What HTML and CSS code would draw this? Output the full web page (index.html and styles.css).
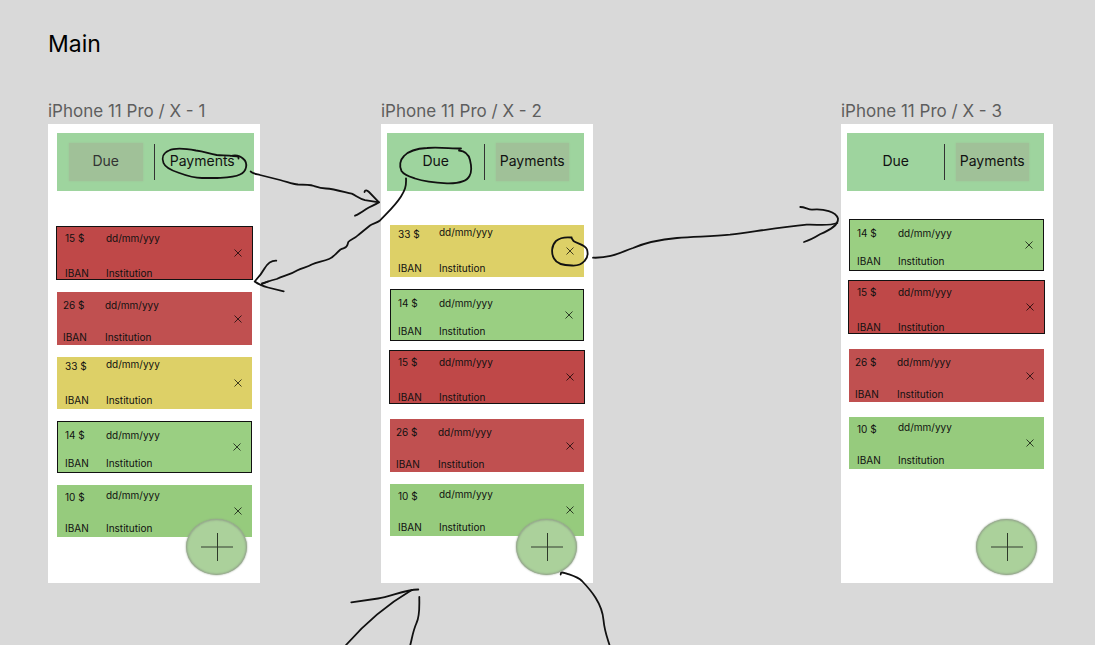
FILE: index.html
```html
<!DOCTYPE html>
<html lang="en">
<head>
<meta charset="utf-8">
<title>Main</title>
<link rel="stylesheet" href="styles.css">
</head>
<body>
<main class="canvas">
  <h1 class="page-title">Main</h1>

  <section class="artboard artboard-1">
    <h2 class="artboard-name">iPhone 11 Pro / X - 1</h2>
    <div class="screen">
      <nav class="tabs">
        <button class="tab tab-active tab-faded">Due</button>
        <span class="divider"></span>
        <button class="tab">Payments</button>
      </nav>
      <div class="list">
        <article class="card late">
          <div class="col"><span>15 $</span><span>IBAN</span></div>
          <div class="col wide"><span>dd/mm/yyy</span><span>Institution</span></div>
          <button class="close" aria-label="Remove"><svg viewBox="0 0 8 8"><path d="M.5 .5l7 7M7.5 .5l-7 7"/></svg></button>
        </article>
        <article class="card overdue">
          <div class="col"><span>26 $</span><span>IBAN</span></div>
          <div class="col wide"><span>dd/mm/yyy</span><span>Institution</span></div>
          <button class="close" aria-label="Remove"><svg viewBox="0 0 8 8"><path d="M.5 .5l7 7M7.5 .5l-7 7"/></svg></button>
        </article>
        <article class="card soon">
          <div class="col"><span>33 $</span><span>IBAN</span></div>
          <div class="col wide"><span>dd/mm/yyy</span><span>Institution</span></div>
          <button class="close" aria-label="Remove"><svg viewBox="0 0 8 8"><path d="M.5 .5l7 7M7.5 .5l-7 7"/></svg></button>
        </article>
        <article class="card paid">
          <div class="col"><span>14 $</span><span>IBAN</span></div>
          <div class="col wide"><span>dd/mm/yyy</span><span>Institution</span></div>
          <button class="close" aria-label="Remove"><svg viewBox="0 0 8 8"><path d="M.5 .5l7 7M7.5 .5l-7 7"/></svg></button>
        </article>
        <article class="card open">
          <div class="col"><span>10 $</span><span>IBAN</span></div>
          <div class="col wide"><span>dd/mm/yyy</span><span>Institution</span></div>
          <button class="close" aria-label="Remove"><svg viewBox="0 0 8 8"><path d="M.5 .5l7 7M7.5 .5l-7 7"/></svg></button>
        </article>
      </div>
      <button class="add" aria-label="Add"><svg viewBox="0 0 32 28"><path class="bar" d="M0 14h32"/><path class="stem" d="M16.5 0v28"/></svg></button>
    </div>
  </section>

  <section class="artboard artboard-2">
    <h2 class="artboard-name">iPhone 11 Pro / X - 2</h2>
    <div class="screen">
      <nav class="tabs">
        <button class="tab">Due</button>
        <span class="divider"></span>
        <button class="tab tab-active">Payments</button>
      </nav>
      <div class="list">
        <article class="card soon">
          <div class="col"><span>33 $</span><span>IBAN</span></div>
          <div class="col wide"><span>dd/mm/yyy</span><span>Institution</span></div>
          <button class="close" aria-label="Remove"><svg viewBox="0 0 8 8"><path d="M.5 .5l7 7M7.5 .5l-7 7"/></svg></button>
        </article>
        <article class="card paid">
          <div class="col"><span>14 $</span><span>IBAN</span></div>
          <div class="col wide"><span>dd/mm/yyy</span><span>Institution</span></div>
          <button class="close" aria-label="Remove"><svg viewBox="0 0 8 8"><path d="M.5 .5l7 7M7.5 .5l-7 7"/></svg></button>
        </article>
        <article class="card late">
          <div class="col"><span>15 $</span><span>IBAN</span></div>
          <div class="col wide"><span>dd/mm/yyy</span><span>Institution</span></div>
          <button class="close" aria-label="Remove"><svg viewBox="0 0 8 8"><path d="M.5 .5l7 7M7.5 .5l-7 7"/></svg></button>
        </article>
        <article class="card overdue">
          <div class="col"><span>26 $</span><span>IBAN</span></div>
          <div class="col wide"><span>dd/mm/yyy</span><span>Institution</span></div>
          <button class="close" aria-label="Remove"><svg viewBox="0 0 8 8"><path d="M.5 .5l7 7M7.5 .5l-7 7"/></svg></button>
        </article>
        <article class="card open">
          <div class="col"><span>10 $</span><span>IBAN</span></div>
          <div class="col wide"><span>dd/mm/yyy</span><span>Institution</span></div>
          <button class="close" aria-label="Remove"><svg viewBox="0 0 8 8"><path d="M.5 .5l7 7M7.5 .5l-7 7"/></svg></button>
        </article>
      </div>
      <button class="add" aria-label="Add"><svg viewBox="0 0 32 28"><path class="bar" d="M0 14h32"/><path class="stem" d="M16.5 0v28"/></svg></button>
    </div>
  </section>

  <section class="artboard artboard-3">
    <h2 class="artboard-name">iPhone 11 Pro / X - 3</h2>
    <div class="screen">
      <nav class="tabs">
        <button class="tab">Due</button>
        <span class="divider"></span>
        <button class="tab tab-active">Payments</button>
      </nav>
      <div class="list">
        <article class="card paid">
          <div class="col"><span>14 $</span><span>IBAN</span></div>
          <div class="col wide"><span>dd/mm/yyy</span><span>Institution</span></div>
          <button class="close" aria-label="Remove"><svg viewBox="0 0 8 8"><path d="M.5 .5l7 7M7.5 .5l-7 7"/></svg></button>
        </article>
        <article class="card late">
          <div class="col"><span>15 $</span><span>IBAN</span></div>
          <div class="col wide"><span>dd/mm/yyy</span><span>Institution</span></div>
          <button class="close" aria-label="Remove"><svg viewBox="0 0 8 8"><path d="M.5 .5l7 7M7.5 .5l-7 7"/></svg></button>
        </article>
        <article class="card overdue">
          <div class="col"><span>26 $</span><span>IBAN</span></div>
          <div class="col wide"><span>dd/mm/yyy</span><span>Institution</span></div>
          <button class="close" aria-label="Remove"><svg viewBox="0 0 8 8"><path d="M.5 .5l7 7M7.5 .5l-7 7"/></svg></button>
        </article>
        <article class="card open">
          <div class="col"><span>10 $</span><span>IBAN</span></div>
          <div class="col wide"><span>dd/mm/yyy</span><span>Institution</span></div>
          <button class="close" aria-label="Remove"><svg viewBox="0 0 8 8"><path d="M.5 .5l7 7M7.5 .5l-7 7"/></svg></button>
        </article>
      </div>
      <button class="add" aria-label="Add"><svg viewBox="0 0 32 28"><path class="bar" d="M0 14h32"/><path class="stem" d="M16.5 0v28"/></svg></button>
    </div>
  </section>

  <svg class="ink" width="1095" height="645" viewBox="0 0 1095 645" aria-hidden="true">
    <!-- ring round Payments -->
    <path d="M238.500 158.500V157C236 155.500 224 155.500 216.700 155C209 154 205 151.500 196 150.500C188 149 175 147.500 169 150.500C163 153 161.500 158 163.500 163C165.500 168 172 170.500 178 172.500C186 175.500 192 178 202 178H217C226 177.500 234 177.500 240 174.500C247 171.500 248 163 243.500 159C240 155.500 236 154.500 230.500 156"/>
    <!-- screen 1 to screen 2 -->
    <path d="M250.700 171.500C252 173.500 256 174 260 175L280 180C288 182 292 184 298 184.500C304 184.500 309 184.500 314 186C318 187.300 321 188.300 326 188.500C334 189 344 192 351.700 193.700C356 195.500 359 198.500 365 200.200L379 202.300"/>
    <path d="M364.500 192C365 189.500 367 190 369 192L379 202.300C375 205 370 206.500 366.700 208.700C362 212 358.500 214.500 355 215.700"/>
    <!-- ring round Due -->
    <path d="M459 150.500C465 151 468.500 154 470 160C471.500 166 471.300 173 469.500 176C466 183 456 183.500 447 183.300C436 182.800 424 181.500 415 178.500C409 176.500 404 175 401.500 171C399 166 400 160 404 156C409 150.500 418 148.500 427 148C438 147 450 148.500 461 148.500"/>
    <!-- screen 2 to screen 1 -->
    <path d="M406 178.300C406.500 187 404.500 191 401 196.500C395 206 387 213 380 220.500C377 223 373 223.500 370 225.500L358.300 235C355 238.500 350.500 239.500 348.300 242C347.500 244 348 245.500 346 247C344.500 248.500 343 248 340.500 249.500C336 253 334 257 329 259C323 261.500 317 262 311.700 264.500C307 267.500 302 267.500 297 270.500C290 275 284 275.500 276.700 279C271 280.500 268 281.500 262 283.300"/>
    <path d="M276.300 260.700C271 260.500 267.500 263.500 264.500 268.500C261.500 274 258 278 254.700 281.500C260 285.500 264 286.500 268 287.500L283.700 291.300M262 284L268 281.500"/>
    <!-- ring round the remove icon -->
    <path d="M571.700 238.300L573.500 241C576.500 243.500 585.500 244.500 587 249.500C588.500 254.500 587.500 258 584.500 261C581 265 577 265.800 572 265.500C564 265.500 557 264.500 554 258.500C551 253 551.500 245.500 556 241C560 237.500 567 237 571.700 237.500"/>
    <!-- screen 2 to screen 3 -->
    <path d="M593 257.700C611 258.300 620 252.500 633 248C647 242 660 239.500 677 238C695 236.500 712 236.500 730 234.700C752 232 778 227.500 806.700 224.700C817 224.200 828 226.500 837.300 223"/>
    <path d="M800.300 207C805 207 808 209.700 812 209.700C824 208.500 836 212 838 218.500C838.500 225 831 229.500 820 234.300C814 238 809 240.500 804 242"/>
    <!-- into screen 2 from below -->
    <path d="M351.300 602.300L378 598.500C391 596.500 405 589.500 418.300 589.500"/>
    <path d="M411.700 590C388 604 367 621 346 645"/>
    <path d="M419.300 597C419.300 607 420 616 416.500 623C413 631 412.500 636 410.300 645"/>
    <!-- out of the add button -->
    <path d="M560.700 574.500C560.500 571.500 563 572.500 566 573.300C572 575.500 578 577 582 581C591 590.500 602 603 603.500 620C604.500 631 607 637 609.500 645"/>
  </svg>
</main>
</body>
</html>
```
FILE: styles.css
```css
* {
  box-sizing: border-box;
}

body {
  margin: 0;
  font-family: Inter, "Liberation Sans", sans-serif;
  color: #111;
  background: #d9d9d9;
}

button {
  margin: 0;
  padding: 0;
  border: 0;
  background: none;
  font: inherit;
  color: inherit;
}

.canvas {
  position: relative;
  min-height: 100vh;
  overflow: hidden;
}

.page-title {
  margin: 0;
  padding: 30px 48px;
  font-size: 23px;
  line-height: 28px;
  font-weight: 400;
  color: #000;
}

.artboard {
  position: absolute;
  top: 100px;
  width: 212px;
}

.artboard-1 { left: 48px; }
.artboard-2 { left: 381px; }
.artboard-3 { left: 841px; }

.artboard-name {
  margin: 0;
  padding-bottom: 2px;
  font-size: 17px;
  line-height: 22px;
  font-weight: 400;
  color: #5e5e5e;
  white-space: nowrap;
}

.screen {
  position: relative;
  min-height: 459px;
  padding: 9px 9px 44px 6px;
  background: #fff;
}

.artboard-1 .screen {
  padding-left: 9px;
  padding-right: 6px;
}

.tabs {
  display: flex;
  align-items: center;
  gap: 11px;
  height: 58px;
  padding: 0 15px 0 12px;
  background: #9ed49e;
}

.tab {
  flex: 1 1 0;
  min-width: 0;
  height: 38px;
  padding-bottom: 2px;
  font-size: 14px;
  line-height: 16px;
}

.tab-active {
  background: #a0c198;
  box-shadow: 0 0 2px #a0c198;
}

.tab-faded {
  color: #333;
}

.divider {
  width: 1px;
  height: 36px;
  background: #333;
}

.list {
  display: flex;
  flex-direction: column;
  gap: 12px;
  padding: 34px 0 0 3px;
}

.artboard-1 .list {
  padding: 35px 2px 0 0;
}

.artboard-3 .list {
  padding: 28px 0 0 2px;
}

.card {
  display: flex;
  min-height: 52px;
  padding-left: 8px;
  font-size: 10px;
  line-height: 12px;
}

.col {
  display: flex;
  flex-direction: column;
  justify-content: space-between;
  width: 41px;
  padding: 6px 0 3px;
}

.wide {
  flex: 1;
}

.close {
  align-self: center;
  width: 8px;
  height: 8px;
  margin-right: 10px;
}

.close svg {
  display: block;
  fill: none;
  stroke: #000;
  stroke-opacity: .7;
}

.late {
  min-height: 54px;
  margin: 0 -1px;
  border: 1px solid #111;
  background: #bf4848;
}

.late .col { padding: 5px 0 0; }

.card + .late {
  margin-top: -3px;
  margin-bottom: 3px;
}

.overdue {
  min-height: 53px;
  padding-left: 6px;
  background: #c05050;
}

.overdue .col {
  width: 42px;
  padding: 7px 0 2px;
}

.artboard-3 .overdue {
  margin-bottom: 3px;
}

.soon { background: #ddd067; }
.soon .col { padding-top: 3px; }
.soon .wide { padding-top: 1px; }

.paid {
  padding-left: 7px;
  border: 1px solid #111;
  background: #9acf82;
}

.paid .col { padding-top: 7px; }

.open { background: #96cb7d; }
.open .wide { padding-top: 4px; }

.add {
  position: absolute;
  right: 16px;
  bottom: 8px;
  display: grid;
  place-items: center;
  width: 61px;
  height: 56px;
  border: 1px solid #98ab8f;
  border-radius: 50%;
  background: #abd19b;
  box-shadow: 0 0 2px #8b9b84, inset 0 0 2px #8b9b84;
}

.artboard-1 .add {
  right: 13px;
}

.add svg {
  width: 32px;
  height: 28px;
  fill: none;
}

.bar {
  stroke: #6f8765;
  stroke-width: 2;
}

.stem {
  stroke: #2e3a29;
}

.ink {
  position: absolute;
  top: 0;
  left: 0;
  fill: none;
  stroke: #111;
  stroke-width: 1.8;
  stroke-linecap: round;
  stroke-linejoin: round;
  pointer-events: none;
}
```
